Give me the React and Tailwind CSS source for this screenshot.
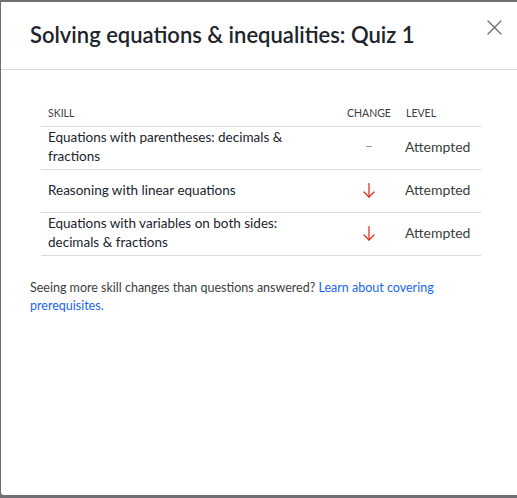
import React from 'react';

const rows = [
  { skill: 'Equations with parentheses: decimals & fractions', change: 'none', level: 'Attempted' },
  { skill: 'Reasoning with linear equations', change: 'down', level: 'Attempted' },
  { skill: 'Equations with variables on both sides: decimals & fractions', change: 'down', level: 'Attempted' },
];

function DownArrow() {
  return (
    <svg width="14" height="16" viewBox="0 0 14 16" fill="none" stroke="#d92916" strokeWidth="1.2" strokeLinecap="round" strokeLinejoin="round">
      <path d="M7 1.5v13.5" />
      <path d="M2 10l5 5 5-5" />
    </svg>
  );
}

export default function App() {
  return (
    <div className="w-[517px] h-[498px] bg-[#707074] pl-px pt-[2px] pb-[3px] overflow-hidden" style={{ fontFamily: 'Lato, "Noto Sans", sans-serif' }}>
      <div className="h-full bg-white rounded-bl-[3px] flex flex-col">
        <div className="h-[68px] border-b border-[#dcdcdd] flex items-center justify-between pl-[29px] pr-[13px] shrink-0">
          <h1 className="text-[22px] font-semibold text-[#21242c] -mt-[3px]">Solving equations &amp; inequalities: Quiz 1</h1>
          <button className="w-[20px] h-[20px] flex items-center justify-center -mt-[17px]">
            <svg width="15" height="15" viewBox="0 0 15 15" stroke="#6b6d72" strokeWidth="1.3" strokeLinecap="round">
              <path d="M1 1l13 13M14 1L1 14" />
            </svg>
          </button>
        </div>

        <div className="px-[40px] pt-[37px] pr-[36px]">
          <div className="flex items-end h-[20px] pb-[4px] text-[10.5px] uppercase text-[#3b3e40] border-b border-[#dcdcdd]">
            <div className="flex-1 pl-[7px]">Skill</div>
            <div className="w-[60px] text-center">Change</div>
            <div className="w-[82px] pl-[7px]">Level</div>
          </div>
          {rows.map((r, i) => (
            <div key={i} className="flex items-center h-[43px] pb-[3px] border-b border-[#dcdcdd] text-[13.5px] leading-[19px] text-[#21242c]">
              <div className="flex-1 pl-[7px] pr-[40px] pt-[1px]">{r.skill}</div>
              <div className="w-[60px] flex justify-center">
                {r.change === 'down' ? <DownArrow /> : <span className="text-[#888d93]">–</span>}
              </div>
              <div className="w-[82px] pl-[6px] text-[14px] text-[#3b3e40]">{r.level}</div>
            </div>
          ))}
        </div>

        <p className="px-[29px] pr-[70px] mt-[23px] text-[12.5px] leading-[18px] text-[#3b3e40]">
          Seeing more skill changes than questions answered?{' '}
          <a href="#" className="text-[#1865f2]">Learn about covering prerequisites.</a>
        </p>
      </div>
    </div>
  );
}
